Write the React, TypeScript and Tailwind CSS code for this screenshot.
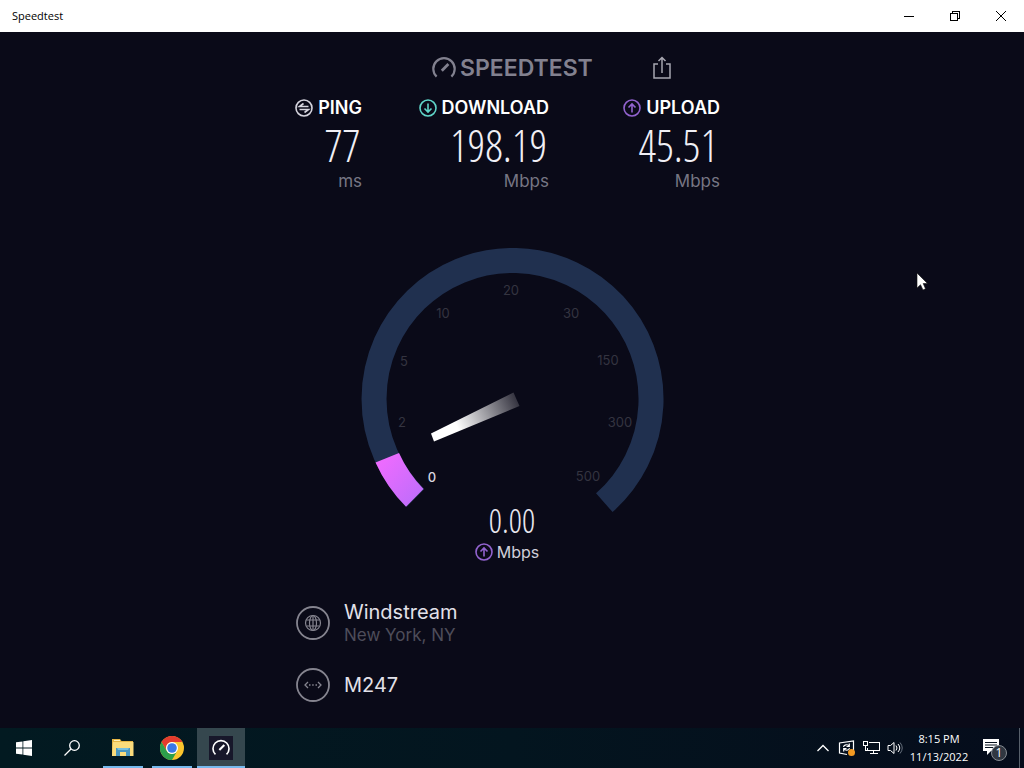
import type { ReactNode } from 'react';

const arrowPaths = {
  down: 'M9 4.5v8.5M5.5 9.5 9 13l3.5-3.5',
  up: 'M9 13.5V5M5.5 8.5 9 5l3.5 3.5',
};

const ArrowCircle = ({ direction, color }: { direction: 'up' | 'down'; color: string }) => (
  <svg width="18" height="18" viewBox="0 0 18 18" fill="none" stroke={color} strokeWidth="1.6">
    <circle cx="9" cy="9" r="8" />
    <path d={arrowPaths[direction]} />
  </svg>
);

const PingIcon = () => (
  <svg width="18" height="18" viewBox="0 0 18 18" fill="none" stroke="#d6d5de" strokeWidth="1.6">
    <circle cx="9" cy="9" r="8" />
    <path d="M13.5 7.5h-9L8.5 4.5M4.5 10.5h9L9.5 13.5" />
  </svg>
);

const GaugeIcon = ({ size, color }: { size: number; color: string }) => (
  <svg width={size} height={size} viewBox="0 0 24 24" fill="none" stroke={color} strokeWidth="2.2">
    <path d="M4.6 20.6A10.7 10.7 0 1 1 19.4 20.6" />
    <path d="M9.8 14.7 16.4 8.1" strokeWidth="2.8" />
  </svg>
);

type ResultProps = {
  label: string;
  value: string;
  unit: string;
  icon: ReactNode;
};

const Result = ({ label, value, unit, icon }: ResultProps) => (
  <div className="flex flex-col items-end">
    <div className="flex items-center gap-[5px] text-[18px] leading-6 font-semibold text-white">
      {icon}
      <h2>{label}</h2>
    </div>
    <p className="pr-0.5 font-['Open_Sans_Condensed_Light','Roboto_Condensed','Liberation_Sans_Narrow',sans-serif] text-[44px] leading-[50px] font-light text-[#f0eff5]">
      {value}
    </p>
    <p className="text-[17px] leading-[22px] text-[#777684]">{unit}</p>
  </div>
);

const ticks = [
  { label: '0', x: 71, y: 234 },
  { label: '2', x: 41, y: 179 },
  { label: '5', x: 43, y: 118 },
  { label: '10', x: 82, y: 70 },
  { label: '20', x: 150, y: 47 },
  { label: '30', x: 210, y: 70 },
  { label: '150', x: 247, y: 117 },
  { label: '300', x: 259, y: 179 },
  { label: '500', x: 227, y: 233 },
];

const Gauge = () => (
  <svg width="304" height="265" viewBox="-1 0 304 265" role="img" aria-label="Upload speed gauge">
    <defs>
      <linearGradient id="progress" x1="0" y1="0" x2="1" y2="1">
        <stop offset="0" stopColor="#f56bff" />
        <stop offset="1" stopColor="#b96dfa" />
      </linearGradient>
      <linearGradient id="needle" gradientUnits="userSpaceOnUse" x1="70" y1="190" x2="156" y2="151">
        <stop offset="0.3" stopColor="#ffffff" />
        <stop offset="1" stopColor="#34333f" />
      </linearGradient>
    </defs>
    <path
      d="M54.5 249.8A138.5 138.5 0 1 1 243.3 254.7"
      fill="none"
      stroke="#20304f"
      strokeWidth="25"
    />
    <path d="M45 258.8 62.5 241A126 126 0 0 1 38 205L14.5 214.5A151 151 0 0 0 45 258.8Z" fill="url(#progress)" />
    <path d="M70 185.5 152.5 144.5 158.5 158 73 193.5Z" fill="url(#needle)" />
    {ticks.map(({ label, x, y }) => (
      <text
        key={label}
        x={x}
        y={y}
        textAnchor="middle"
        className={label === '0' ? 'fill-[#d9d8e0] text-[13px] font-medium' : 'fill-[#343440] text-[13px]'}
      >
        {label}
      </text>
    ))}
  </svg>
);

const TitleBar = () => (
  <header className="flex h-8 items-center justify-between bg-white font-['Open_Sans',sans-serif] text-[11px] text-black">
    <h1 className="pl-3">Speedtest</h1>
    <div className="flex">
      <button aria-label="Minimize" className="flex h-8 w-[46px] items-center justify-center">
        <svg width="10" height="10" stroke="black" shapeRendering="crispEdges">
          <path d="M0 5.5h10" />
        </svg>
      </button>
      <button aria-label="Restore" className="flex h-8 w-[46px] items-center justify-center">
        <svg width="10" height="10" fill="none" stroke="black" shapeRendering="crispEdges">
          <path d="M.5 2.5h7v7h-7zM2.5 2.5v-2h7v7h-2" />
        </svg>
      </button>
      <button aria-label="Close" className="flex h-8 w-[46px] items-center justify-center">
        <svg width="10" height="10" stroke="black">
          <path d="m0 0 10 10M10 0 0 10" />
        </svg>
      </button>
    </div>
  </header>
);

const Provider = ({ name, place, icon }: { name: string; place?: string; icon: ReactNode }) => (
  <div className="flex items-center gap-[14px]">
    <svg width="34" height="34" viewBox="0 0 34 34" fill="none" stroke="#85848f">
      <circle cx="17" cy="17" r="16" strokeWidth="1.8" />
      {icon}
    </svg>
    <div>
      <p className="text-xl leading-6 text-[#e2e1e9]">{name}</p>
      {place && <p className="text-[17px] leading-[22px] text-[#4e4d5a]">{place}</p>}
    </div>
  </div>
);

const Taskbar = () => (
  <footer className="flex h-10 items-stretch justify-between bg-linear-to-r from-[#021a21] via-[#03151f] to-[#050c1b] font-['Open_Sans',sans-serif] text-white">
    <nav className="flex">
      <button aria-label="Start" className="flex w-12 items-center justify-center">
        <svg width="16" height="16" viewBox="0 0 16 16" fill="white">
          <path d="M0 2.3 6.5 1.4v6.2H0zM7.3 1.3 16 0v7.6H7.3zM0 8.4h6.5v6.2L0 13.7zM7.3 8.4H16V16l-8.7-1.3z" />
        </svg>
      </button>
      <button aria-label="Search" className="flex w-12 items-center justify-center">
        <svg width="16" height="16" viewBox="0 0 16 16" fill="none" stroke="white" strokeWidth="1.3">
          <circle cx="10.5" cy="5.5" r="4.8" />
          <path d="M7 9 .5 15.5" />
        </svg>
      </button>
      <div className="ml-[3px] flex gap-px">
        <button aria-label="File Explorer" className="flex w-12 flex-col items-center justify-between">
          <svg className="mt-2" width="22" height="24" viewBox="0 0 22 24">
            <path d="M0 3h8l1.5 2H21v15H0z" fill="#e7b645" />
            <path d="M1 6h20.5v14H0z" fill="#fbdc7c" />
            <path d="M2 4h6v1H2z" fill="#fff1bd" />
            <path d="M4 12h14v8h-4v-4H8v4H4z" fill="#4a96bf" />
            <path d="M5 12h12l-1 2H6z" fill="#75bfe0" />
          </svg>
          <span className="h-0.5 w-10 bg-[#76b9ed]" />
        </button>
        <button aria-label="Google Chrome" className="flex w-12 flex-col items-center justify-between">
          <svg className="mt-2" width="24" height="24" viewBox="0 0 24 24">
            <circle cx="12" cy="12" r="12" fill="#fbc52d" />
            <path d="M1.6 6A12 12 0 0 1 22.4 6H12a6 6 0 0 0-5.2 9z" fill="#e33b2e" />
            <path d="M1.6 6A12 12 0 0 0 12 24l5.2-9A6 6 0 0 1 6.8 15z" fill="#2c9f4b" />
            <circle cx="12" cy="12" r="6" fill="white" />
            <circle cx="12" cy="12" r="4.8" fill="#3978e6" />
          </svg>
          <span className="h-0.5 w-10 bg-[#76b9ed]" />
        </button>
        <button aria-label="Speedtest" className="flex w-12 flex-col items-center justify-between bg-[#35474e]">
          <span className="mt-2 flex size-6 items-center justify-center bg-[#17172a]">
            <GaugeIcon size={18} color="white" />
          </span>
          <span className="h-0.5 w-12 bg-[#76b9ed]" />
        </button>
      </div>
    </nav>
    <div className="flex">
      <button aria-label="Show hidden icons" className="flex w-6 items-center justify-center">
        <svg width="12" height="8" fill="none" stroke="white" strokeWidth="1.3">
          <path d="m.5 7 5.5-5.5L11.5 7" />
        </svg>
      </button>
      <button aria-label="Updates" className="flex w-6 items-center justify-center">
        <svg width="18" height="18" viewBox="0 0 18 18" fill="none" stroke="white" strokeWidth="1.2">
          <path d="M9 15.5 1.5 14V4L15.5 2v9" />
          <path d="M5.5 8c.5-2.5 4-3 5.5-1M11.3 4.5V7.5H8.5M11.5 9c-.5 2.5-4 3-5.5 1M5.7 12.5V9.7h2.8" />
          <circle cx="13.5" cy="13.5" r="3.5" fill="#f39a22" stroke="none" />
        </svg>
      </button>
      <button aria-label="Network" className="flex w-6 items-center justify-center">
        <svg width="17" height="16" fill="none" stroke="white" shapeRendering="crispEdges">
          <path d="M5.5 2.5h11v8h-12v-3M10.5 10.5v3M6.5 13.5h8M.5 1.5h4v4h-4zM2.5 5.5v5h2" />
        </svg>
      </button>
      <button aria-label="Volume" className="flex w-6 items-center justify-center">
        <svg width="16" height="16" fill="none" stroke="white">
          <path d="M1 5.5h2.5L7 2.5v11l-3.5-3H1z" />
          <path d="M9 5.5q2 2.5 0 5M11 4q3.5 4 0 8" />
          <path d="M13 2.5q4.5 5.5 0 11" stroke="#66707c" />
        </svg>
      </button>
      <button className="w-16 text-center text-[11px] leading-[18px]">
        <span className="block">8:15 PM</span>
        <span className="block">11/13/2022</span>
      </button>
      <button aria-label="Notifications" className="flex w-12 items-center justify-center">
        <svg width="26" height="26" viewBox="0 0 26 26">
          <path d="M1 4h16v12H9l-4 4v-4H1z" fill="white" />
          <path d="M3 7.5h12M3 10h12M3 12.5h8" stroke="#07121f" />
          <circle cx="17" cy="18" r="7.5" fill="#303741" stroke="#858b92" />
          <text x="17" y="22" textAnchor="middle" className="fill-white text-[12px]">
            1
          </text>
        </svg>
      </button>
      <button aria-label="Show desktop" className="w-[5px] border-l border-[#57606b]" />
    </div>
  </footer>
);

const App = () => (
  <div className="relative flex min-h-screen flex-col bg-[#0a0a18] font-['Inter',sans-serif]">
    <TitleBar />
    <main className="mx-auto flex w-full max-w-[432px] flex-1 flex-col pt-5">
      <div className="flex h-8 items-center">
        <a href="#" className="ml-[136px] flex items-center gap-1 text-[23px] font-semibold text-[#82818f]">
          <GaugeIcon size={24} color="#82818f" />
          SPEEDTEST
        </a>
        <button aria-label="Share" className="mr-[57px] ml-auto">
          <svg width="18" height="24" fill="none" stroke="#a7a6b0" strokeWidth="1.5">
            <path d="M5 8H1v14h16V8h-4M9 17V2M5.5 5 9 1.5 12.5 5" />
          </svg>
        </button>
      </div>
      <section className="grid grid-cols-[66px_187px_171px] justify-items-end pt-3">
        <Result label="PING" value="77" unit="ms" icon={<PingIcon />} />
        <Result
          label="DOWNLOAD"
          value="198.19"
          unit="Mbps"
          icon={<ArrowCircle direction="down" color="#5fd5c8" />}
        />
        <Result
          label="UPLOAD"
          value="45.51"
          unit="Mbps"
          icon={<ArrowCircle direction="up" color="#9263cf" />}
        />
      </section>
      <section className="flex flex-col items-center pt-14">
        <Gauge />
        <p className="-mt-2 font-['Open_Sans_Condensed_Light','Roboto_Condensed','Liberation_Sans_Narrow',sans-serif] text-[33px] leading-8 font-light text-[#e7e6ee]">
          0.00
        </p>
        <div className="mr-[10px] flex items-center gap-1 pt-[3px] text-[16px] leading-6 text-[#cfced8]">
          <ArrowCircle direction="up" color="#9263cf" />
          Mbps
        </div>
      </section>
      <section className="flex flex-col gap-[22px] pt-9">
        <Provider
          name="Windstream"
          place="New York, NY"
          icon={
            <g strokeWidth="1.2">
              <circle cx="17" cy="17" r="7.5" />
              <ellipse cx="17" cy="17" rx="3.5" ry="7.5" />
              <path d="M17 9.5v15M10.5 14h13M10.5 20h13" />
            </g>
          }
        />
        <Provider
          name="M247"
          icon={
            <path
              d="m12 14-3 3 3 3M22 14l3 3-3 3M13 17h1.5M16.2 17h1.5M19.5 17H21"
              strokeWidth="1.3"
            />
          }
        />
      </section>
    </main>
    <Taskbar />
    <svg className="pointer-events-none absolute top-[272px] left-[916px]" width="12" height="19">
      <path
        d="M1 1v15l3.5-3.3L7 18l2.5-1.2L7.2 11.5h4.3z"
        fill="white"
        stroke="#111"
        strokeWidth=".6"
      />
    </svg>
  </div>
);

export default App;
